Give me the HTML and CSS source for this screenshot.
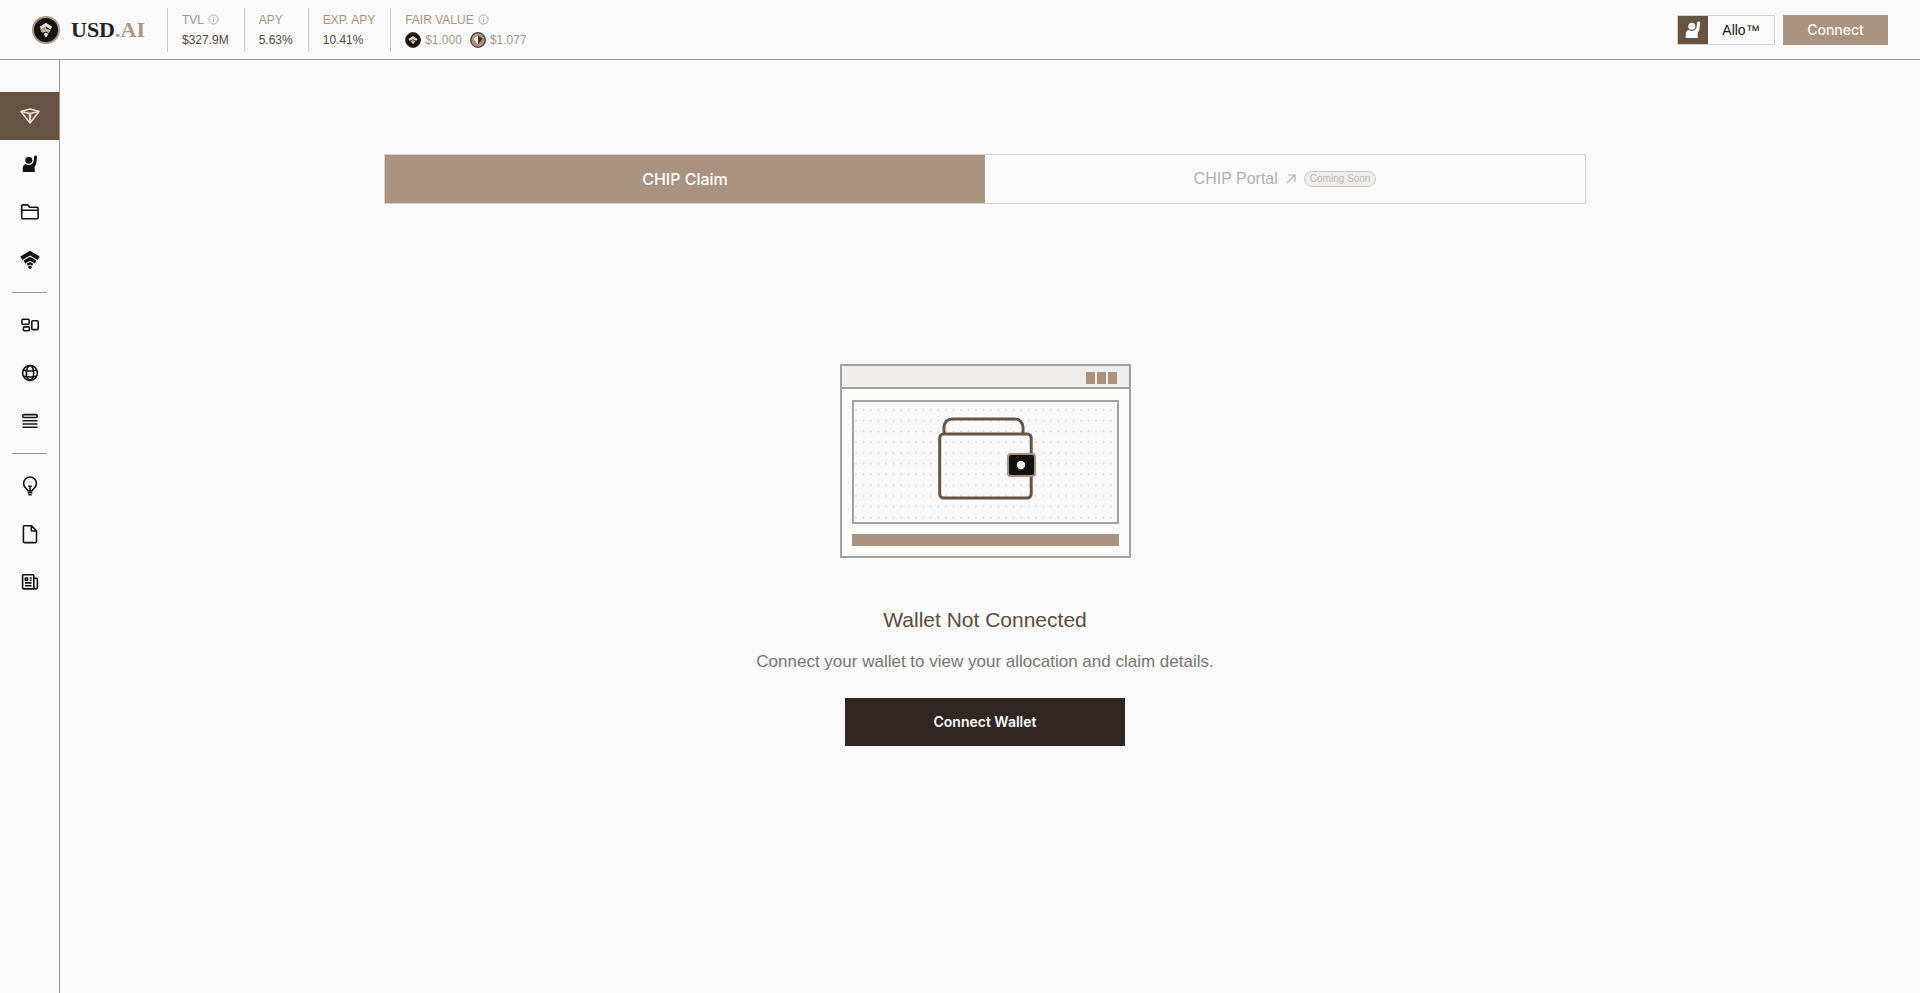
FILE: index.html
```html
<!DOCTYPE html>
<html lang="en">
<head>
<meta charset="utf-8">
<title>USD.AI – CHIP Claim</title>
<link rel="stylesheet" href="styles.css">
</head>
<body>
<header class="topbar">
  <a class="brand" href="#">
    <svg width="28" height="28" viewBox="0 0 28 28" aria-hidden="true">
      <circle cx="14" cy="14" r="13" fill="#141312" stroke="#a89280" stroke-width="2"/>
      <path d="M14 6.800l6.200 4-1.700 2.600L14 10.600l-4.500 2.800-1.700-2.600z" fill="#e9dccf"/>
      <path d="M7.800 10.800l1.700 2.600L14 10.600v3l-3.400 3.200-1.800-1.600z" fill="#b59d89"/>
      <path d="M14 12.600l4.600 2-1.900 2.700-2.700-1.900-3.200 1.400-1-2z" fill="#cbb6a4"/>
      <path d="M14 16.600l2.400 1.500L14 21.400l-2.400-3.300z" fill="#f5ece3"/>
    </svg>
    <span class="brand-name">USD<span class="brand-suffix">.AI</span></span>
  </a>
  <dl class="stats">
    <div class="stat">
      <dt>TVL <svg class="info" width="11" height="11" viewBox="0 0 11 11" aria-hidden="true"><circle cx="5.500" cy="5.500" r="4.600"/><path d="M5.500 3v.9M5.500 5v3.200"/></svg></dt>
      <dd>$327.9M</dd>
    </div>
    <div class="stat">
      <dt>APY</dt>
      <dd>5.63%</dd>
    </div>
    <div class="stat">
      <dt>EXP. APY</dt>
      <dd>10.41%</dd>
    </div>
    <div class="stat">
      <dt>FAIR VALUE <svg class="info" width="11" height="11" viewBox="0 0 11 11" aria-hidden="true"><circle cx="5.500" cy="5.500" r="4.600"/><path d="M5.500 3v.9M5.500 5v3.200"/></svg></dt>
      <dd class="coins">
        <span class="coin"><svg width="16" height="16" viewBox="0 0 16 16" aria-hidden="true"><circle cx="8" cy="8" r="7.500" fill="#141312" stroke="#4a4039"/><path d="M8 4l4.500 3-1 1.800L8 7.200 4.500 8.800 3.500 7z" fill="#e9dccf"/><path d="M8 8l2.800 1L8 12.500 5.200 9z" fill="#b8aca2"/></svg>$1.000</span>
        <span class="coin"><svg width="16" height="16" viewBox="0 0 16 16" aria-hidden="true"><circle cx="8" cy="8" r="7.300" fill="#a89280" stroke="#4a3f36" stroke-width="1.300"/><path d="M8 3.500v9L6 10 3.500 6.800z" fill="#f3e9df"/><path d="M8 3.500l4.500 3.300L10 10l-2 2.500z" fill="#3b3029"/></svg>$1.077</span>
      </dd>
    </div>
  </dl>
  <div class="actions">
    <button class="allo" type="button">
      <span class="allo-icon"><svg width="16" height="18" viewBox="0 0 16 18" aria-hidden="true"><use href="#person"/></svg></span>
      <span class="allo-label">Allo™</span>
    </button>
    <button class="connect" type="button">Connect</button>
  </div>
</header>

<div class="shell">
  <nav class="sidebar" aria-label="Main">
    <a class="item active" href="#" aria-label="CHIP">
      <svg width="20" height="18" viewBox="0 0 20 18" fill="none" stroke="#f3dfcb" stroke-width="1.500" stroke-linejoin="round"><path d="M1 4.500L10 2l9 2.500L10 16z"/><path d="M1 4.500L10 6.500l9-2M9.300 6.500L10 15l.7-8.500"/></svg>
    </a>
    <a class="item" href="#" aria-label="Allo">
      <svg width="16" height="18" viewBox="0 0 16 18"><g id="person" fill="currentColor"><circle cx="6.800" cy="5.300" r="3.500"/><path d="M.8 17v-4c0-2.300 1.400-4 3.200-4 .9.700 1.800 1 2.800 1 2.700 0 4.500-1.700 4.900-4.300l.3-3.400C12.100 1.100 12.700.5 13.600.5c.9 0 1.500.7 1.400 1.700l-.6 5.600c-.2 1.800-.9 3-1.800 3.900L12.800 17z"/></g></svg>
    </a>
    <a class="item" href="#" aria-label="Portfolio">
      <svg class="line" width="20" height="18" viewBox="0 0 20 18"><path d="M1.700 5.800V3.200c0-.8.500-1.300 1.300-1.300h4.200c.5 0 .8.200 1.100.6l1.200 1.700h7.300c.8 0 1.300.5 1.300 1.300v8.900c0 .9-.5 1.400-1.300 1.400H3c-.8 0-1.300-.5-1.300-1.400zM1.700 7.200h16.400"/></svg>
    </a>
    <a class="item" href="#" aria-label="Stake">
      <svg width="20" height="20" viewBox="0 0 20 20" fill="currentColor"><path d="M10 .8L19.700 6.500l-2 3.500L10 5.600 2.300 10 .3 6.500z"/><path d="M10 6.800l6.500 3.800-1.700 2.900L10 10.800l-4.800 2.700-1.700-2.900z"/><path d="M10 11.900l3.300 1.900-1.200 1.900-2.100-1.200-2.100 1.200-1.200-1.900z"/><path d="M10 15.400l2.200 1.600L10 19.200 7.800 17z"/></svg>
    </a>
    <hr class="rule">
    <a class="item" href="#" aria-label="Dashboard">
      <svg class="line" width="20" height="16" viewBox="0 0 20 16"><rect x="1.900" y="2.300" width="7.300" height="5" rx="1"/><rect x="3.400" y="9.900" width="6" height="3.900" rx="1"/><rect x="11.800" y="3.700" width="6.400" height="8.900" rx="1"/></svg>
    </a>
    <a class="item" href="#" aria-label="Network">
      <svg class="line" width="18" height="18" viewBox="0 0 18 18"><circle cx="9" cy="9" r="7.400"/><ellipse cx="9" cy="9" rx="3.700" ry="7.400"/><path d="M2.300 5.900c4.200 1.300 9.200 1.300 13.400 0M2 11.900c4.400 1.300 9.600 1.300 14 0"/></svg>
    </a>
    <a class="item" href="#" aria-label="Queue">
      <svg class="line" width="18" height="18" viewBox="0 0 18 18"><rect x="1.900" y="2.600" width="14.200" height="2.900" rx="1"/><path d="M1.500 8.700h15M1.500 12h15M1.500 15.300h15"/></svg>
    </a>
    <hr class="rule">
    <a class="item" href="#" aria-label="Learn">
      <svg class="line" width="18" height="20" viewBox="0 0 18 20"><path d="M6.800 14.700c-.1-1-.6-1.500-1.800-2.300a6.400 6.400 0 1 1 8 0c-1.200.8-1.700 1.300-1.800 2.300zM7.200 10.200h3.600M9 10.400v4M6.700 16.600h4.600M7.300 18.700h3.400"/></svg>
    </a>
    <a class="item" href="#" aria-label="Docs">
      <svg class="line" width="18" height="20" viewBox="0 0 18 20"><path d="M3.300 1.700h7.200l5 5v10.700c0 .8-.4 1.200-1.200 1.200H3.600c-.8 0-1.200-.4-1.200-1.200V2.700c0-.6.300-1 .9-1zM10.300 1.900v4c0 .7.400 1.100 1.100 1.100h3.900"/></svg>
    </a>
    <a class="item" href="#" aria-label="News">
      <svg class="line" width="18" height="18" viewBox="0 0 18 18"><path d="M13 15.900H2.700c-.7 0-1.100-.4-1.100-1.100V2.900c0-.7.400-1.100 1.100-1.100h9c.7 0 1.100.4 1.100 1.100v11.400c0 2.100 3.600 2.100 3.600 0V6.400c0-.7-.4-1.100-1.100-1.100H13M4 9.900h6.600M4 12.700h6.600M8.700 5h2M8.700 7.300h2"/><rect x="4.300" y="5" width="2.200" height="2.200"/></svg>
    </a>
  </nav>

  <main class="content">
    <div class="tabs">
      <button class="tab selected" type="button">CHIP Claim</button>
      <button class="tab" type="button" disabled>
        CHIP Portal
        <svg width="10" height="10" viewBox="0 0 10 10" fill="none" stroke="currentColor" stroke-width="1.200" aria-hidden="true"><path d="M1 9l8-8M2 1h7v7"/></svg>
        <span class="badge">Coming Soon</span>
      </button>
    </div>

    <section class="empty">
      <svg class="art" width="291" height="194" viewBox="0 0 291 194" aria-hidden="true">
        <defs>
          <pattern id="dots" x="12.300" y="40.600" width="7.500" height="10.750" patternUnits="userSpaceOnUse"><circle cx="3.700" cy="5.400" r=".9" fill="#dcd8d4"/></pattern>
        </defs>
        <rect x="1" y="1" width="289" height="192" fill="#fcfcfb" stroke="#a3a19f" stroke-width="2"/>
        <rect x="2" y="2" width="287" height="21" fill="#efedeb"/>
        <path d="M1 24h289" stroke="#a3a19f" stroke-width="2"/>
        <path d="M246 8h9v12h-9zM257 8h9v12h-9zM268 8h9v12h-9z" fill="#a99380"/>
        <rect x="13" y="37" width="265" height="122" fill="#fafafa" stroke="#a3a19f" stroke-width="2"/>
        <rect x="14" y="40" width="262" height="118" fill="url(#dots)"/>
        <rect x="12" y="170" width="267" height="12" fill="#a99380"/>
        <g fill="none" stroke="#665443" stroke-width="3">
          <path d="M104 69V63a8 8 0 0 1 8-8h63a8 8 0 0 1 8 8v6"/>
          <rect x="99.700" y="70" width="91.500" height="64" rx="4"/>
        </g>
        <rect x="168" y="90" width="27" height="22" rx="3" fill="#111" stroke="#a8917e" stroke-width="2"/>
        <circle cx="181" cy="101" r="4.200" fill="#fbf2ea"/>
      </svg>
      <h1 class="title">Wallet Not Connected</h1>
      <p class="text">Connect your wallet to view your allocation and claim details.</p>
      <button class="wallet" type="button">Connect Wallet</button>
    </section>
  </main>
</div>
</body>
</html>
```
FILE: styles.css
```css
* {
  box-sizing: border-box;
}

body {
  margin: 0;
  min-height: 100vh;
  display: flex;
  flex-direction: column;
  background: #fafafa;
  color: #141414;
  font-family: "Liberation Sans", Arial, sans-serif;
  font-size: 16px;
}

button {
  margin: 0;
  padding: 0;
  border: 0;
  font: inherit;
  cursor: pointer;
}

svg {
  display: block;
  flex: none;
}

.topbar {
  display: flex;
  align-items: center;
  height: 60px;
  padding: 0 32px;
  border-bottom: 1px solid #979695;
}

.brand {
  display: flex;
  align-items: center;
  gap: 11px;
  margin-right: 22px;
  color: #25211e;
  text-decoration: none;
}

.brand-name {
  font: bold 22px/28px "Liberation Serif", serif;
}

.brand-suffix {
  color: #a99888;
}

.stats {
  display: flex;
  margin: 0;
}

.stat {
  height: 44px;
  padding: 2px 15px 0 14px;
  border-left: 1px solid #cfcdcb;
  font-size: 12px;
  line-height: 20px;
}

.stat dt {
  display: flex;
  align-items: center;
  gap: 4px;
  height: 20px;
  color: #a99380;
}

.stat dd {
  margin: 0;
  color: #54473b;
}

.info {
  fill: none;
  stroke: #b5a79b;
}

.stat .coins {
  display: flex;
  gap: 8px;
  color: #a19a94;
}

.coin {
  display: flex;
  align-items: center;
  gap: 4px;
}

.actions {
  display: flex;
  gap: 8px;
  margin-left: auto;
}

.allo {
  display: flex;
  width: 98px;
  height: 30px;
  border: 1px solid #d2d1d0;
  background: #fafafa;
  color: #141414;
}

.allo-icon {
  display: grid;
  place-items: center;
  width: 30px;
  height: 28px;
  background: #665443;
  color: #fff;
}

.allo-label {
  flex: 1;
  font-size: 14px;
  line-height: 28px;
}

.connect {
  width: 105px;
  height: 30px;
  background: #a99380;
  color: #fcf8f2;
  font: 500 14px/30px Inter, sans-serif;
}

.shell {
  display: flex;
  flex: 1;
}

.sidebar {
  width: 60px;
  padding-top: 32px;
  border-right: 1px solid #979695;
}

.item {
  display: grid;
  place-items: center;
  height: 48px;
  color: #141414;
}

.active {
  background: #665443;
}

.line {
  fill: none;
  stroke: currentColor;
  stroke-width: 1.6;
  stroke-linejoin: round;
}

.rule {
  height: 1px;
  margin: 8px 12px;
  border: 0;
  background: #979695;
}

.content {
  flex: 1;
  display: flex;
  flex-direction: column;
  align-items: center;
  padding: 94px 10px 48px 0;
}

.tabs {
  display: grid;
  grid-template-columns: 1fr 1fr;
  width: 100%;
  max-width: 1202px;
  border: 1px solid #d2d1d0;
}

.tab {
  display: flex;
  align-items: center;
  justify-content: center;
  gap: 8px;
  height: 48px;
  background: transparent;
  color: #b3b1af;
}

.selected {
  background: #a99380;
  color: #fff;
  font: 500 16px/24px Inter, sans-serif;
}

.badge {
  padding: 0 5px;
  border: 1px solid #cbc7c3;
  border-radius: 8px;
  background: #efedea;
  color: #bfb8b1;
  font-size: 10px;
  line-height: 14px;
}

.empty {
  display: flex;
  flex-direction: column;
  align-items: center;
  margin-top: 160px;
}

.title {
  margin: 48px 0 16px;
  color: #5c4c3d;
  font-size: 21px;
  font-weight: normal;
  line-height: 28px;
}

.text {
  margin: 0 0 24px;
  color: #777573;
  font-size: 17px;
  line-height: 24px;
}

.wallet {
  width: 280px;
  height: 48px;
  background: #302724;
  color: #fff;
  font: 600 14px/48px Inter, sans-serif;
}
```
